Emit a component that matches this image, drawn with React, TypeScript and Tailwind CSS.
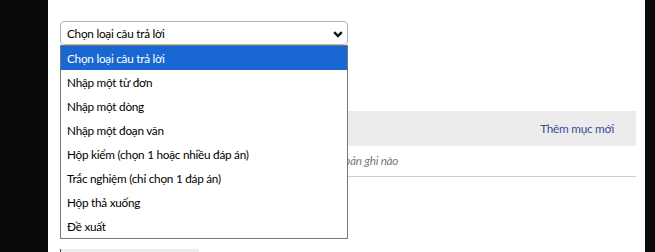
import React from "react";

const OPTIONS = [
  "Chọn loại câu trả lời",
  "Nhập một từ đơn",
  "Nhập một dòng",
  "Nhập một đoạn văn",
  "Hộp kiểm (chọn 1 hoặc nhiều đáp án)",
  "Trắc nghiệm (chỉ chọn 1 đáp án)",
  "Hộp thả xuống",
  "Đề xuất",
];

function Chevron() {
  return (
    <svg width="10" height="7" viewBox="0 0 10 7" className="shrink-0">
      <path d="M1.2 1.2 L5 5 L8.8 1.2" fill="none" stroke="#111" strokeWidth="2.4" />
    </svg>
  );
}

export default function App() {
  return (
    <div
      className="flex h-[252px] w-[655px] overflow-hidden bg-[#0a0a0a] text-[11.75px] tracking-[-0.25px] text-black"
      style={{ fontFamily: 'Lato, "Noto Sans", sans-serif' }}
    >
      <div className="w-[48px] shrink-0" />
      <div className="relative flex w-[597px] shrink-0 flex-col bg-white pl-[12px] pr-[9px]">
        {/* select */}
        <div className="mt-[21px] flex h-[24px] w-[288px] shrink-0 items-center justify-between rounded-[4px] border border-[#b5b5b5] bg-white pl-[6px] pr-[4px] pt-[2px]">
          <span>Chọn loại câu trả lời</span>
          <Chevron />
        </div>

        {/* open list */}
        <div className="absolute left-[12px] top-[45px] z-10 w-[288px] border border-[#767676] bg-white">
          {OPTIONS.map((opt, i) => (
            <div
              key={opt}
              className={
                i === 0
                  ? "flex h-[24px] items-center bg-[#1967d2] pl-[6px] pt-[2px] text-white"
                  : "flex h-[24px] items-center pl-[6px] pt-[2px]"
              }
            >
              {opt}
            </div>
          ))}
        </div>

        {/* table */}
        <div className="mt-[66px] w-[576px] shrink-0">
          <div className="flex h-[35px] items-center justify-end bg-[#ececec] pr-[22px] pt-[1px]">
            <span className="text-[#3b4a96]">Thêm mục mới</span>
          </div>
          <div className="flex h-[31px] items-center border-b border-[#cfcfcf] pl-[238px] italic text-[#7a7a7a]">
            <span>Không có bản ghi nào</span>
          </div>
        </div>

        <div className="mt-[72px] h-[10px] w-[139px] shrink-0 border-l border-[#3a4a7a] bg-[#eceeee]" />
      </div>
      <div className="flex-1" />
    </div>
  );
}
